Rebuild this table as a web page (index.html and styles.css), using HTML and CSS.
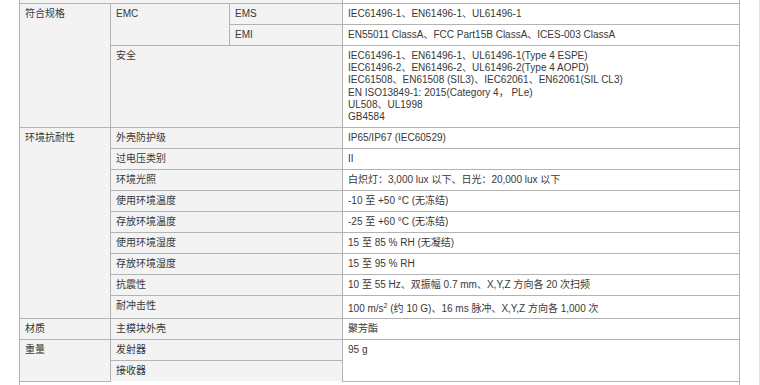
FILE: index.html
```html
<!DOCTYPE html>
<html lang="zh">
<head>
<meta charset="utf-8">
<link rel="stylesheet" href="styles.css">
</head>
<body>
<div class="page">
<table class="spec">
  <colgroup>
    <col class="c1"><col class="c2"><col class="c3"><col class="c4">
  </colgroup>
  <tr class="stub"><td class="lbl" colspan="3"></td><td></td></tr>
  <tr><td class="lbl" rowspan="3">符合规格</td><td class="lbl" rowspan="2">EMC</td><td class="lbl">EMS</td><td>IEC61496-1、EN61496-1、UL61496-1</td></tr>
  <tr><td class="lbl">EMI</td><td>EN55011 ClassA、FCC Part15B ClassA、ICES-003 ClassA</td></tr>
  <tr><td class="lbl" colspan="2">安全</td><td class="multi">IEC61496-1、EN61496-1、UL61496-1(Type 4 ESPE)<br>IEC61496-2、EN61496-2、UL61496-2(Type 4 AOPD)<br>IEC61508、EN61508 (SIL3)、IEC62061、EN62061(SIL CL3)<br>EN ISO13849-1: 2015(Category 4， PLe)<br>UL508、UL1998<br>GB4584</td></tr>
  <tr><td class="lbl" rowspan="9">环境抗耐性</td><td class="lbl" colspan="2">外壳防护级</td><td>IP65/IP67 (IEC60529)</td></tr>
  <tr><td class="lbl" colspan="2">过电压类别</td><td>II</td></tr>
  <tr><td class="lbl" colspan="2">环境光照</td><td>白炽灯：3,000 lux 以下、日光：20,000 lux 以下</td></tr>
  <tr><td class="lbl" colspan="2">使用环境温度</td><td>-10 至 +50 °C (无冻结)</td></tr>
  <tr><td class="lbl" colspan="2">存放环境温度</td><td>-25 至 +60 °C (无冻结)</td></tr>
  <tr><td class="lbl" colspan="2">使用环境湿度</td><td>15 至 85 % RH (无凝结)</td></tr>
  <tr><td class="lbl" colspan="2">存放环境湿度</td><td>15 至 95 % RH</td></tr>
  <tr><td class="lbl" colspan="2">抗震性</td><td>10 至 55 Hz、双振幅 0.7 mm、X,Y,Z 方向各 20 次扫频</td></tr>
  <tr><td class="lbl" colspan="2">耐冲击性</td><td class="supcell">100 m/s<sup>2</sup> (约 10 G)、16 ms 脉冲、X,Y,Z 方向各 1,000 次</td></tr>
  <tr><td class="lbl">材质</td><td class="lbl" colspan="2">主模块外壳</td><td>聚芳酯</td></tr>
  <tr><td class="lbl" rowspan="2">重量</td><td class="lbl" colspan="2">发射器</td><td rowspan="2">95 g</td></tr>
  <tr><td class="lbl open" colspan="2">接收器</td></tr>
  <tr class="tail"><td colspan="4"></td></tr>
</table>
</div>
</body>
</html>
```

FILE: styles.css
```css
html, body {
  margin: 0;
  padding: 0;
  background: #ffffff;
}

.page {
  width: 760px;
  height: 385px;
  box-sizing: border-box;
  padding-left: 19px;
  border-right: 1px solid #e2e2e2;
  overflow: hidden;
}

.spec {
  border-collapse: collapse;
  table-layout: fixed;
  width: 720px;
  border-top: hidden;
  font-family: "Liberation Sans", Arial, "Noto Sans CJK SC", sans-serif;
  font-size: 10px;
  line-height: 12px;
  color: #383838;
}

.c1 { width: 91px; }
.c2 { width: 119px; }
.c3 { width: 113px; }
.c4 { width: 397px; }

.spec td {
  border: 1px solid #b3b3b3;
  padding: 4px 5px 4px 5px;
  vertical-align: top;
  text-align: left;
  background: #ffffff;
}

.spec td.lbl {
  background: #f3f3f3;
}

.spec td.multi {
  line-height: 12.2px;
}

.spec td.open {
  border-bottom: hidden;
}

.spec td.supcell {
  padding-top: 7px;
  padding-bottom: 3px;
}

.spec sup {
  font-size: 7px;
  line-height: 0;
  vertical-align: 4px;
}

.stub td {
  height: 3px;
  padding: 0;
}

.tail td {
  height: 20px;
  padding: 0;
}
```
